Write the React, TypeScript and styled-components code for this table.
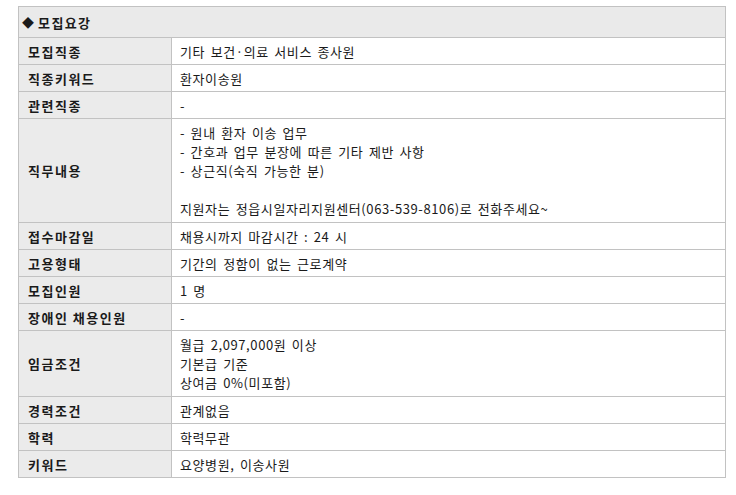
import styled, { createGlobalStyle } from "styled-components";

const GlobalStyle = createGlobalStyle`
  body {
    margin: 0;
    background: #fff;
    font-family: "Noto Sans CJK KR", "Noto Sans", sans-serif;
  }
`;

const Wrap = styled.div`
  padding: 6px 10px 0 18px;
`;

const Table = styled.div`
  width: 708px;
  box-sizing: border-box;
  border: 1px solid #c2c2c2;
  border-bottom: 0;
  display: grid;
  grid-template-columns: 153px 1fr;
  font-size: 13px;
  color: #1a1a1a;
`;

const Title = styled.div`
  grid-column: 1 / -1;
  height: 30px;
  background: #eaeaea;
  border-bottom: 1px solid #c2c2c2;
  display: flex;
  align-items: center;
  gap: 4px;
  padding-left: 3px;
  font-weight: bold;
  letter-spacing: 1.4px;
`;

const Diamond = styled.span`
  font-size: 12px;
  letter-spacing: 0;
`;

const Label = styled.div`
  box-sizing: border-box;
  background: #ebebeb;
  border-right: 1px solid #c2c2c2;
  border-bottom: 1px solid #c2c2c2;
  display: flex;
  align-items: center;
  padding-left: 9px;
  font-weight: bold;
  letter-spacing: 1.5px;
`;

const Value = styled.div<{ $multi?: boolean }>`
  border-bottom: 1px solid #c2c2c2;
  padding: ${(p) => (p.$multi ? "4px 8px" : "4px 8px 3px")};
  line-height: 19px;
  letter-spacing: 0.6px;
  word-spacing: 2px;
`;

const Line = styled.div`
  min-height: 19px;
`;

const rows: { label: string; lines: string[] }[] = [
  { label: "모집직종", lines: ["기타 보건·의료 서비스 종사원"] },
  { label: "직종키워드", lines: ["환자이송원"] },
  { label: "관련직종", lines: ["-"] },
  {
    label: "직무내용",
    lines: [
      "- 원내 환자 이송 업무",
      "- 간호과 업무 분장에 따른 기타 제반 사항",
      "- 상근직(숙직 가능한 분)",
      "",
      "지원자는 정읍시일자리지원센터(063-539-8106)로 전화주세요~",
    ],
  },
  { label: "접수마감일", lines: ["채용시까지 마감시간 : 24 시"] },
  { label: "고용형태", lines: ["기간의 정함이 없는 근로계약"] },
  { label: "모집인원", lines: ["1 명"] },
  { label: "장애인 채용인원", lines: ["-"] },
  {
    label: "임금조건",
    lines: ["월급 2,097,000원 이상", "기본급 기준", "상여금 0%(미포함)"],
  },
  { label: "경력조건", lines: ["관계없음"] },
  { label: "학력", lines: ["학력무관"] },
  { label: "키워드", lines: ["요양병원, 이송사원"] },
];

const App = () => {
  return (
    <>
      <GlobalStyle />
      <Wrap>
        <Table>
          <Title>
            <Diamond>◆</Diamond>모집요강
          </Title>
          {rows.map((row) => (
            <>
              <Label key={row.label + "-l"}>{row.label}</Label>
              <Value key={row.label + "-v"} $multi={row.lines.length > 1}>
                {row.lines.map((line, i) => (
                  <Line key={i}>{line}</Line>
                ))}
              </Value>
            </>
          ))}
        </Table>
      </Wrap>
    </>
  );
};

export default App;
